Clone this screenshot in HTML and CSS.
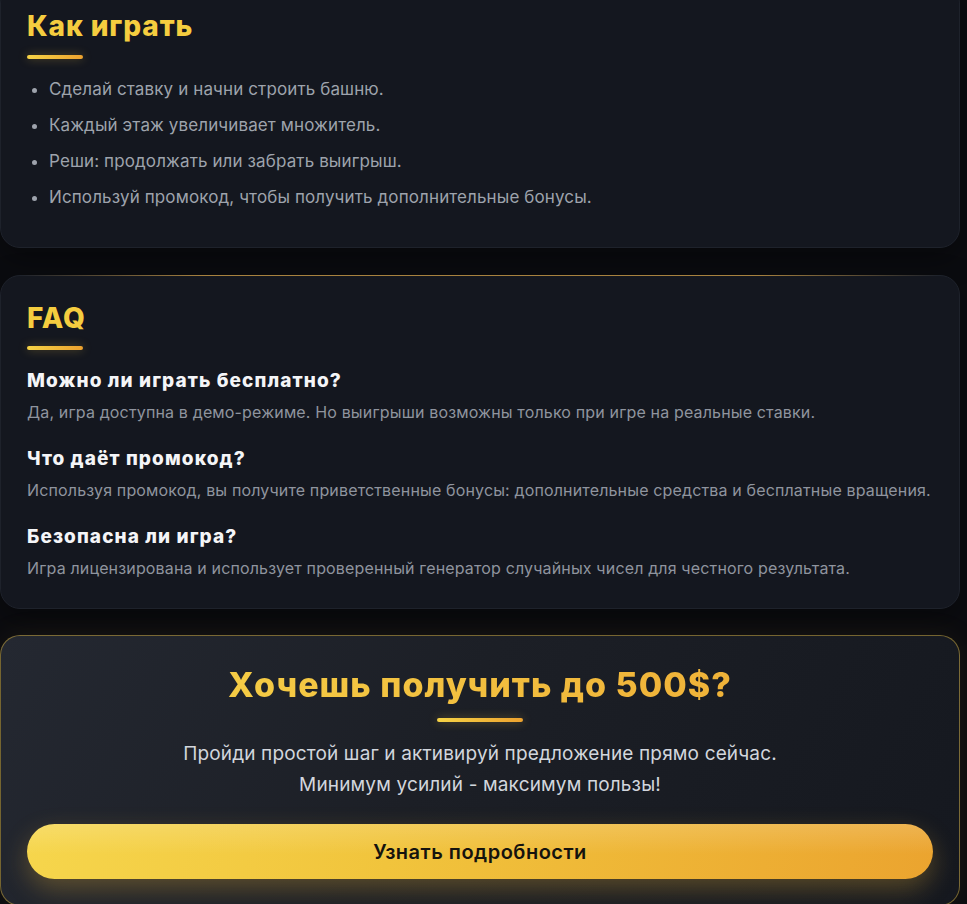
FILE: index.html
```html
<!DOCTYPE html>
<html lang="ru">
<head>
    <meta charset="UTF-8">
    <meta name="viewport" content="width=device-width, initial-scale=1.0">
    <title>Башня — как играть</title>
    <link rel="stylesheet" href="styles.css">
</head>
<body>
    <div class="page">
        <section class="card card-first">
            <h2 class="title">Как играть</h2>
            <div class="bar"></div>
            <ul class="steps">
                <li>Сделай ставку и начни строить башню.</li>
                <li>Каждый этаж увеличивает множитель.</li>
                <li>Реши: продолжать или забрать выигрыш.</li>
                <li>Используй промокод, чтобы получить дополнительные бонусы.</li>
            </ul>
        </section>

        <section class="card card-faq">
            <h2 class="title">FAQ</h2>
            <div class="bar"></div>
            <div class="faq-item">
                <h3>Можно ли играть бесплатно?</h3>
                <p>Да, игра доступна в демо-режиме. Но выигрыши возможны только при игре на реальные ставки.</p>
            </div>
            <div class="faq-item">
                <h3>Что даёт промокод?</h3>
                <p>Используя промокод, вы получите приветственные бонусы: дополнительные средства и бесплатные вращения.</p>
            </div>
            <div class="faq-item">
                <h3>Безопасна ли игра?</h3>
                <p>Игра лицензирована и использует проверенный генератор случайных чисел для честного результата.</p>
            </div>
        </section>

        <section class="card cta">
            <h2 class="cta-title">Хочешь получить до 500$?</h2>
            <div class="bar bar-center"></div>
            <p class="cta-text">Пройди простой шаг и активируй предложение прямо сейчас.<br>Минимум усилий - максимум пользы!</p>
            <button type="button" class="cta-button">Узнать подробности</button>
        </section>
    </div>
</body>
</html>
```

FILE: styles.css
```css
body {
    margin: 0;
    padding: 0;
    background-color: #0b0c10;
    color: #9ca1ab;
    font-family: Inter, "Noto Sans", Arial, sans-serif;
}
.page {
    width: 960px;
    padding-bottom: 40px;
}
.card {
    position: relative;
    background: #14171f;
    border: 1px solid #1e222b;
    border-radius: 20px;
    padding: 26px;
    margin-bottom: 27px;
    box-shadow: 0 10px 30px rgba(0, 0, 0, 0.35);
}
.card-first {
    margin-top: -17px;
}
.card-faq {
    padding-bottom: 28px;
    margin-bottom: 26px;
}
.card-faq::before {
    content: "";
    position: absolute;
    top: -1px;
    left: 20px;
    right: 20px;
    height: 1px;
    background: linear-gradient(90deg, rgba(201, 160, 74, 0), #a8823f 20%, #a8823f 80%, rgba(201, 160, 74, 0));
}
.title {
    margin: 0;
    font-size: 28px;
    line-height: 1.2;
    font-weight: 800;
    color: #f5cd3f;
    letter-spacing: 0.9px;
}
.bar {
    width: 56px;
    height: 4px;
    margin-top: 11px;
    border-radius: 2px;
    background: linear-gradient(90deg, #f6d346, #eda22f);
    box-shadow: 0 0 10px rgba(245, 200, 66, 0.35);
}
.bar-center {
    width: 86px;
    margin: 13px auto 0;
}
.steps {
    margin: 18px 0 0;
    padding-left: 22px;
    color: #8d929c;
}
.steps li {
    font-size: 17px;
    line-height: 24px;
    letter-spacing: 0.12px;
    margin-bottom: 12px;
    color: #9ea3ac;
}
.faq-item {
    margin-top: 19px;
}
.faq-item + .faq-item {
    margin-top: 23px;
}
.faq-item h3 {
    margin: 0;
    font-size: 19px;
    line-height: 24px;
    font-weight: 800;
    letter-spacing: 1.1px;
    color: #f4f5f7;
}
.faq-item p {
    margin: 7px 0 0;
    font-size: 16px;
    line-height: 24px;
    letter-spacing: 0.15px;
    color: #8f949e;
}
.cta {
    text-align: center;
    padding-top: 28px;
    border-color: rgba(196, 164, 62, 0.55);
    background: linear-gradient(120deg, #242831 0%, #1c1f26 45%, #15181f 100%);
    box-shadow: 0 0 30px rgba(212, 170, 60, 0.08);
}
.cta-title {
    margin: 0;
    font-size: 34px;
    line-height: 41px;
    font-weight: 800;
    letter-spacing: 1px;
    background: linear-gradient(90deg, #f7d64a, #f0b53a 70%, #ecab35);
    -webkit-background-clip: text;
    background-clip: text;
    color: transparent;
}
.cta-text {
    margin: 16px 0 0;
    font-size: 19px;
    line-height: 31px;
    letter-spacing: 0.15px;
    color: #d2d6dd;
}
.cta-button {
    display: block;
    width: 100%;
    height: 55px;
    margin-top: 24px;
    border: none;
    border-radius: 28px;
    font-family: inherit;
    font-size: 20px;
    font-weight: 600;
    letter-spacing: 0.5px;
    color: #15130e;
    cursor: pointer;
    background:
        linear-gradient(180deg, rgba(255, 255, 255, 0.16), rgba(255, 255, 255, 0) 55%),
        linear-gradient(100deg, #f6d64c 0%, #f1c43c 40%, #eba42f 100%);
    box-shadow: 0 10px 26px rgba(236, 178, 52, 0.3);
}
```
